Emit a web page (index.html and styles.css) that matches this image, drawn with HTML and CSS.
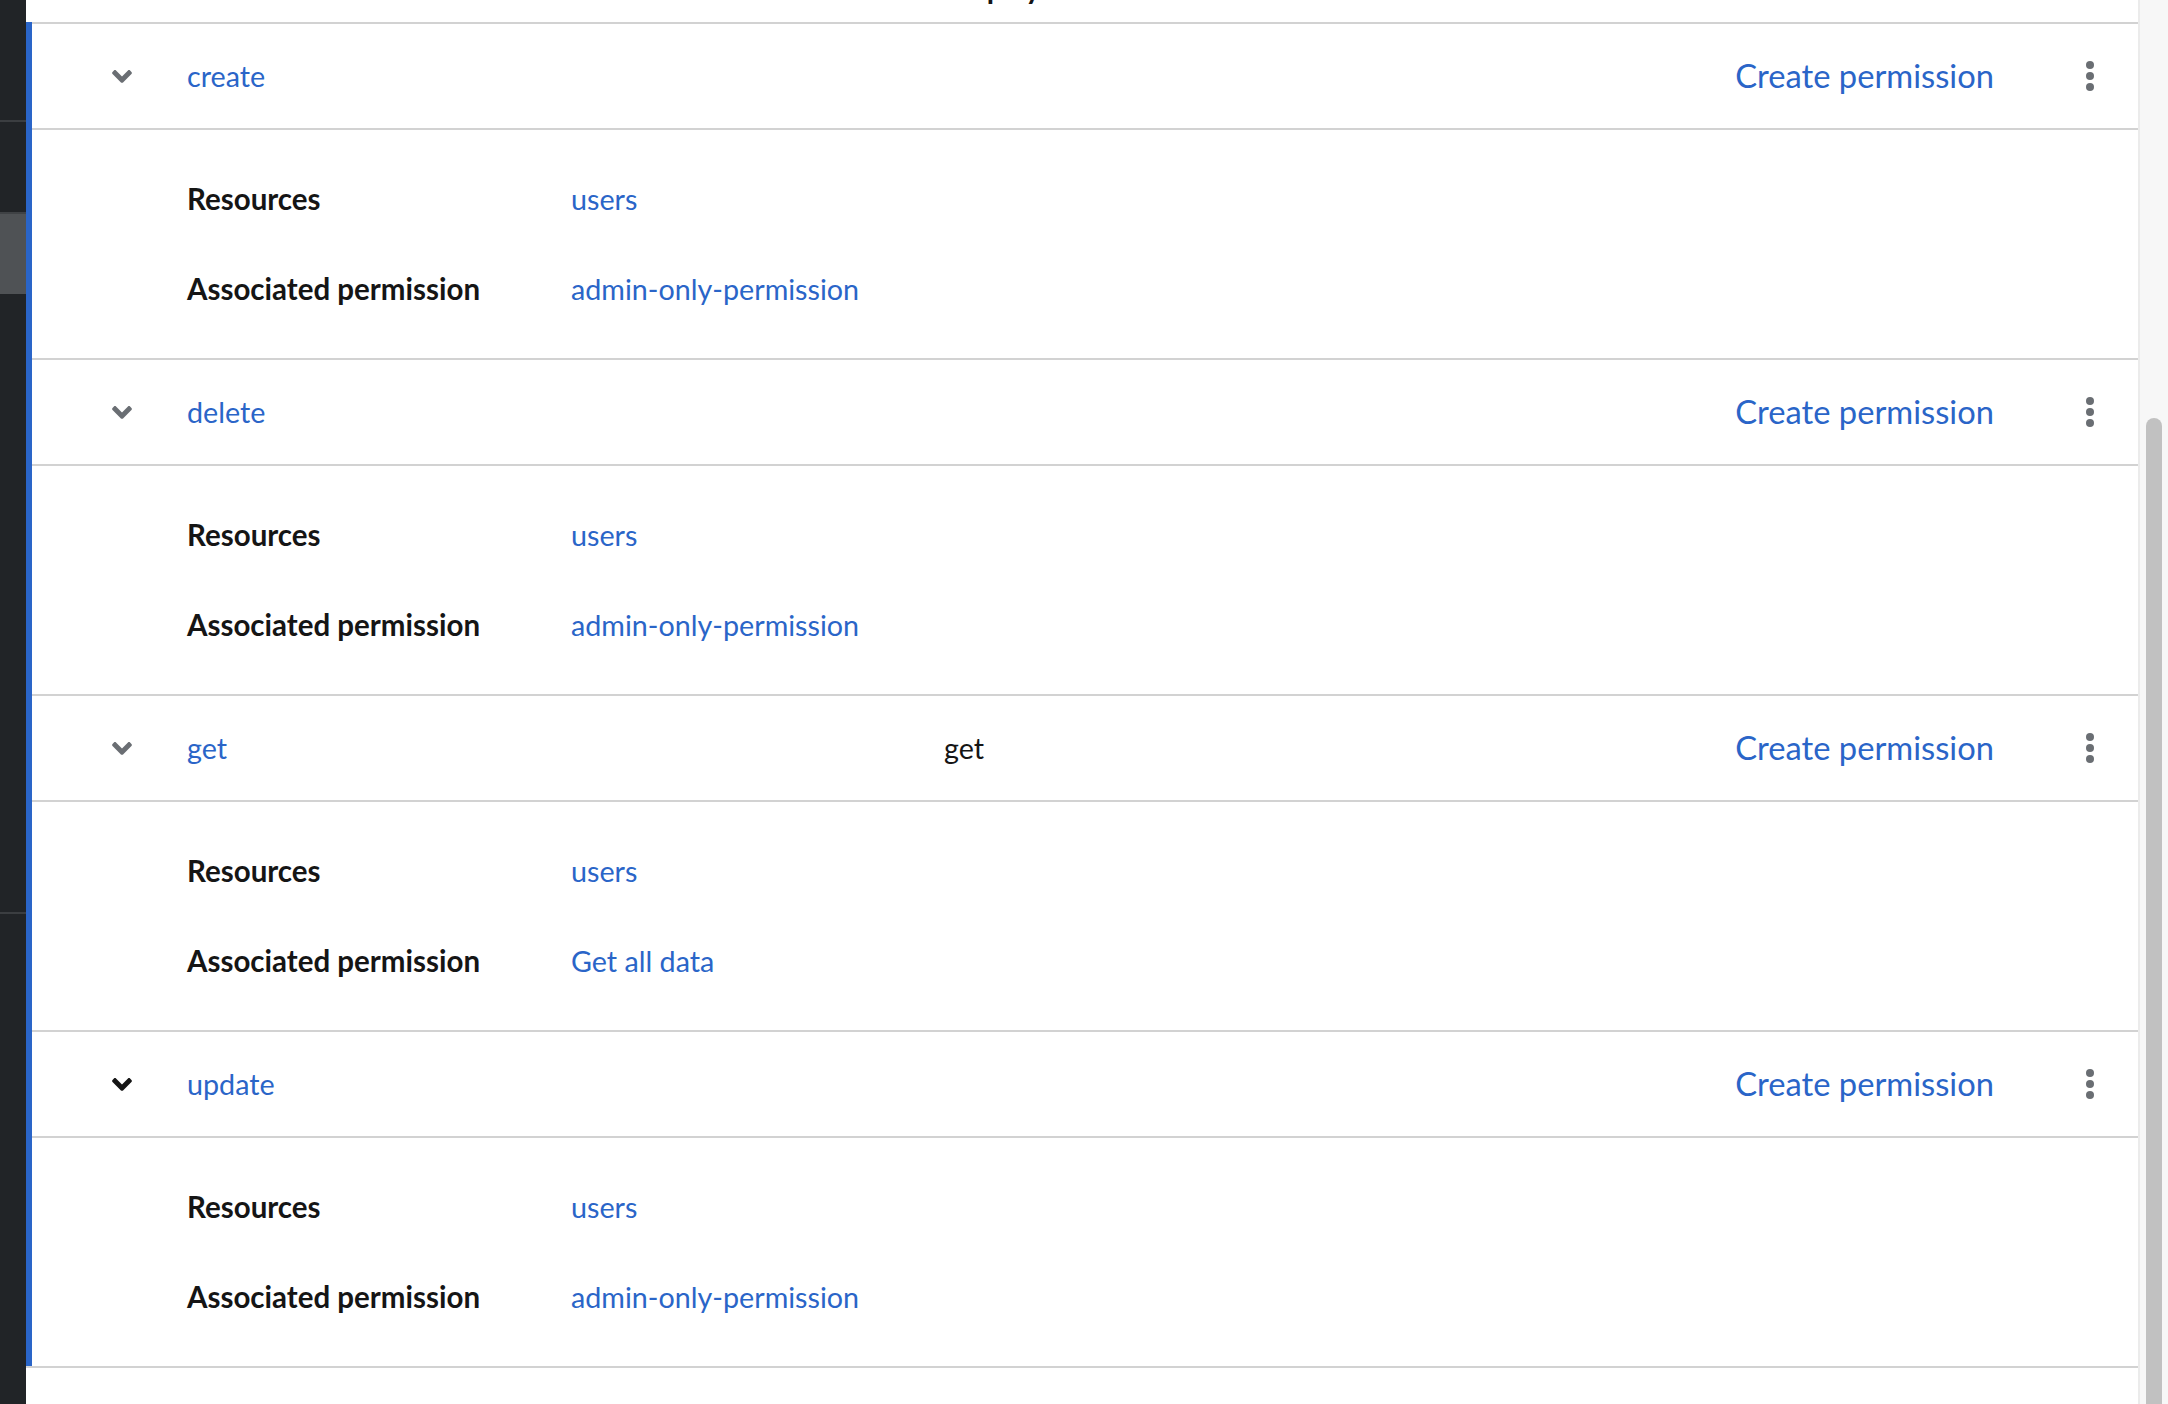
FILE: index.html
```html
<!DOCTYPE html>
<html lang="en">
<head>
<meta charset="utf-8">
<title>Scopes</title>
<link rel="stylesheet" href="styles.css">
</head>
<body>
<div class="app">
  <nav class="sidebar">
    <div class="nav-top"></div>
    <div class="nav-divider"></div>
    <div class="nav-gap"></div>
    <div class="nav-active"></div>
    <div class="nav-mid"></div>
    <div class="nav-divider"></div>
  </nav>
  <main class="main">
    <div class="table">
      <div class="thead">
        <span class="th-toggle"></span>
        <span class="th-name">Name</span>
        <span class="th-display">Display name</span>
      </div>
      <div class="tbody">
        <section class="group">
          <div class="row">
            <span class="toggle"><svg viewBox="0 152 320 210"><path d="M143 352.3L7 216.3c-9.4-9.4-9.4-24.6 0-33.9l22.6-22.6c9.4-9.4 24.6-9.4 33.9 0l96.4 96.4 96.4-96.4c9.4-9.4 24.6-9.4 33.9 0l22.6 22.6c9.4 9.4 9.4 24.6 0 33.9l-136 136c-9.4 9.5-24.6 9.5-34 .1z"/></svg></span>
            <a class="name">create</a>
            <span class="display"></span>
            <a class="action">Create permission</a>
            <span class="kebab"><i></i><i></i><i></i></span>
          </div>
          <dl class="details">
            <dt>Resources</dt><dd><a>users</a></dd>
            <dt>Associated permission</dt><dd><a>admin-only-permission</a></dd>
          </dl>
        </section>
        <section class="group">
          <div class="row">
            <span class="toggle"><svg viewBox="0 152 320 210"><path d="M143 352.3L7 216.3c-9.4-9.4-9.4-24.6 0-33.9l22.6-22.6c9.4-9.4 24.6-9.4 33.9 0l96.4 96.4 96.4-96.4c9.4-9.4 24.6-9.4 33.9 0l22.6 22.6c9.4 9.4 9.4 24.6 0 33.9l-136 136c-9.4 9.5-24.6 9.5-34 .1z"/></svg></span>
            <a class="name">delete</a>
            <span class="display"></span>
            <a class="action">Create permission</a>
            <span class="kebab"><i></i><i></i><i></i></span>
          </div>
          <dl class="details">
            <dt>Resources</dt><dd><a>users</a></dd>
            <dt>Associated permission</dt><dd><a>admin-only-permission</a></dd>
          </dl>
        </section>
        <section class="group">
          <div class="row">
            <span class="toggle"><svg viewBox="0 152 320 210"><path d="M143 352.3L7 216.3c-9.4-9.4-9.4-24.6 0-33.9l22.6-22.6c9.4-9.4 24.6-9.4 33.9 0l96.4 96.4 96.4-96.4c9.4-9.4 24.6-9.4 33.9 0l22.6 22.6c9.4 9.4 9.4 24.6 0 33.9l-136 136c-9.4 9.5-24.6 9.5-34 .1z"/></svg></span>
            <a class="name">get</a>
            <span class="display">get</span>
            <a class="action">Create permission</a>
            <span class="kebab"><i></i><i></i><i></i></span>
          </div>
          <dl class="details">
            <dt>Resources</dt><dd><a>users</a></dd>
            <dt>Associated permission</dt><dd><a>Get all data</a></dd>
          </dl>
        </section>
        <section class="group">
          <div class="row">
            <span class="toggle toggle-hover"><svg viewBox="0 152 320 210"><path d="M143 352.3L7 216.3c-9.4-9.4-9.4-24.6 0-33.9l22.6-22.6c9.4-9.4 24.6-9.4 33.9 0l96.4 96.4 96.4-96.4c9.4-9.4 24.6-9.4 33.9 0l22.6 22.6c9.4 9.4 9.4 24.6 0 33.9l-136 136c-9.4 9.5-24.6 9.5-34 .1z"/></svg></span>
            <a class="name">update</a>
            <span class="display"></span>
            <a class="action">Create permission</a>
            <span class="kebab"><i></i><i></i><i></i></span>
          </div>
          <dl class="details">
            <dt>Resources</dt><dd><a>users</a></dd>
            <dt>Associated permission</dt><dd><a>admin-only-permission</a></dd>
          </dl>
        </section>
      </div>
      <div class="table-end"></div>
    </div>
  </main>
  <div class="scrollbar"><div class="thumb"></div></div>
</div>
</body>
</html>
```
FILE: styles.css
```css
* { box-sizing: border-box; }
html, body { margin: 0; height: 100%; }
body {
  font-family: "Lato", "Liberation Sans", sans-serif;
  color: #151515;
  background: #fff;
  overflow: hidden;
}
.app { display: flex; height: 100vh; }

.sidebar { width: 26px; flex: none; background: #212427; display: flex; flex-direction: column; }
.nav-top { height: 120px; }
.nav-divider { height: 2px; background: #3b3e41; flex: none; }
.nav-gap { height: 90px; }
.nav-active { height: 82px; background: #4f5255; border-top: 2px solid #3f4245; }
.nav-mid { height: 618px; }

.main { flex: 1; min-width: 0; overflow: hidden; background: #fff; }
.table { margin-top: -70px; }
.thead {
  height: 92px; display: flex; align-items: flex-end;
  padding: 0 0 20px 6px;
  font-size: 29.5px; line-height: 28px; font-weight: 700;
}
.th-toggle { width: 155px; flex: none; }
.th-name { width: 757px; flex: none; }

.tbody { border-left: 6px solid #2a65c8; }
.group { border-top: 2px solid #d2d2d2; }
.row { height: 104px; display: flex; align-items: center; font-size: 28.7px; line-height: 42px; }
.toggle { width: 155px; flex: none; padding-left: 80px; display: flex; align-items: center; }
.toggle svg { width: 20px; height: 13px; fill: #6a6e73; display: block; }
.toggle-hover svg { fill: #151515; }
.name { width: 757px; flex: none; }
.display { flex: 1; }
.action { font-size: 32.7px; }
.kebab { width: 56px; flex: none; margin: 0 20px 0 68px; display: flex; flex-direction: column; align-items: center; gap: 3px; }
.kebab i { width: 8px; height: 8px; border-radius: 50%; background: #6a6e73; }

.details {
  margin: 0; border-top: 2px solid #d2d2d2;
  padding: 48px 0 48px 155px;
  display: grid; grid-template-columns: 384px 1fr; row-gap: 48px;
  font-size: 28.7px; line-height: 42px;
}
.details dt { font-weight: 700; font-size: 29.5px; }
.details dd { margin: 0; }
a { color: #2a65c8; text-decoration: none; }
.table-end { border-top: 2px solid #d2d2d2; }

.scrollbar {
  width: 30px; flex: none; background: #f7f7f7; border-left: 2px solid #ebebeb;
  display: flex; flex-direction: column; padding: 418px 6px 0 6px;
}
.thumb { flex: 1; background: #c1c1c1; border-radius: 8px 8px 0 0; }
```
